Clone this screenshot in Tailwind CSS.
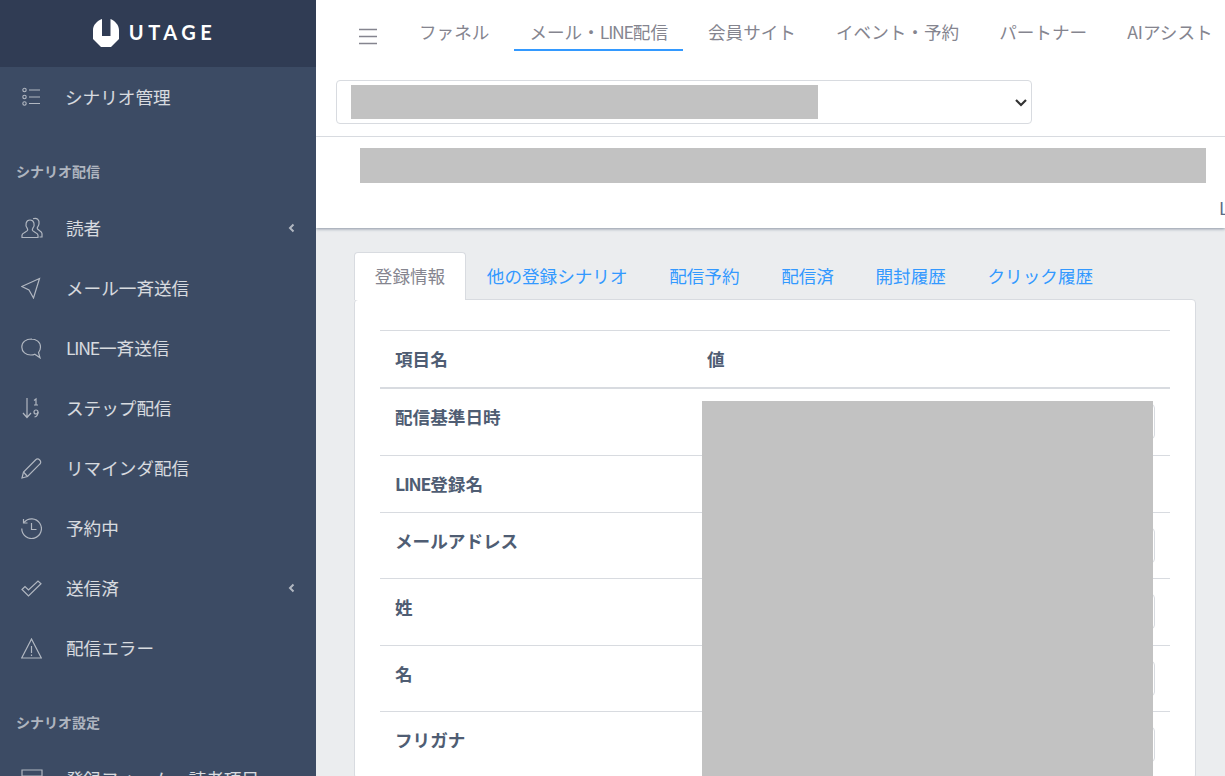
<!DOCTYPE html>
<html lang="ja">
<head>
    <meta charset="UTF-8">
    <title>UTAGE</title>
    <script src="https://cdn.jsdelivr.net/npm/@tailwindcss/browser@4"></script>
</head>
<body class="h-[776px] overflow-hidden bg-[#ebedef] text-[17.6px] leading-[26.4px] text-[#4f5d73] [font-family:'Noto_Sans_CJK_JP','Liberation_Sans',sans-serif]">
<div class="flex h-[776px] overflow-hidden">

    <!-- Sidebar -->
    <aside class="w-[316px] shrink-0 overflow-hidden bg-[#3c4b64] text-white/80">
        <div class="flex h-[67px] items-center justify-center gap-[10px] bg-[#303c54] pb-[2px] pr-[7px]">
            <svg width="26" height="28" viewBox="0 0 26 28" fill="#fff"><path d="M9 0C4 2 0 6 0 11v9l8 8h10l8-8v-9c0-5-4-9-8.500-11v17H9z"/></svg>
            <span class="text-[20px] font-bold tracking-[4.500px] text-white [font-family:Lato,'Liberation_Sans',sans-serif]">UTAGE</span>
        </div>

        <a class="flex h-[60px] items-center pl-[21px]">
            <svg class="mr-[24px] shrink-0 opacity-60" width="20" height="20" viewBox="0 0 20 20" fill="none" stroke="#fff" stroke-width="1.100"><circle cx="3.500" cy="3" r="1.700"/><circle cx="3.500" cy="10" r="1.700"/><circle cx="3.500" cy="16.500" r="1.700"/><path d="M8 3h11M8 10h11M8 16.500h11"/></svg>
            シナリオ管理
        </a>

        <div class="mt-[18px] flex h-[53px] items-center pl-4 text-[14px] font-bold text-white/60">シナリオ配信</div>

        <a class="flex h-[60px] items-center pl-[21px]">
            <svg class="mr-[23px] shrink-0 opacity-60" width="22" height="22" viewBox="0 0 22 22" fill="none" stroke="#fff" stroke-width="1.200"><path d="M1 20.500v-2.500c0-2 4.500-3 5.500-4.500.5-1 .2-1.700-.5-2.700-1.800-2.300-1.500-7.800 3-7.800s5 5.500 3 7.800c-.7 1-1 1.700-.5 2.700 1 1.500 5.500 2.500 5.500 4.500v2.500z"/><path d="M12 1.800c4-1.300 6.500 1 6 5-.2 2-1.500 3-1.800 4.200-.3 2 4.800 3 4.800 5.500v3.500h-2.500"/></svg>
            <span>読者</span>
            <svg class="ml-auto mr-[21px] opacity-60" width="7" height="10" viewBox="0 0 7 10" fill="none" stroke="#fff" stroke-width="2"><path d="M5.500 1.500L2 5l3.500 3.500"/></svg>
        </a>
        <a class="flex h-[60px] items-center pl-[21px]">
            <svg class="mr-[25px] shrink-0 opacity-60" width="20" height="22" viewBox="0 0 20 22" fill="none" stroke="#fff" stroke-width="1.200"><path d="M18.500 1.500L.8 9.500 8 13l4.500 8z"/></svg>
            メール一斉送信
        </a>
        <a class="flex h-[60px] items-center pl-[21px]">
            <svg class="mr-[24px] shrink-0 opacity-60" width="21" height="21" viewBox="0 0 21 21" fill="none" stroke="#fff" stroke-width="1.200"><path d="M10.500 1C5 1 .8 4 .8 9s4.200 8 9 8c1.500 0 3-.3 4-.8l5.200 3.600-1.500-5.300c1.200-1.500 2-3.100 2-5.500 0-5-4.200-8-9.500-8z"/></svg>
            <span><span class="tracking-[-1.200px]">LINE</span>一斉送信</span>
        </a>
        <a class="flex h-[60px] items-center pl-[21px]">
            <svg class="mr-[25px] shrink-0 opacity-60" width="20" height="22" viewBox="0 0 20 22" fill="none" stroke="#fff" stroke-width="1.200"><path d="M6 1v19M2 16l4 4.500 4-4.500"/><path d="M13 3.500l2-1.500v6M13 8h4" /><circle cx="15" cy="15" r="2"/><path d="M17 15c0 3-1 4.500-3.500 5"/></svg>
            ステップ配信
        </a>
        <a class="flex h-[60px] items-center pl-[21px]">
            <svg class="mr-[24px] shrink-0 opacity-60" width="21" height="21" viewBox="0 0 21 21" fill="none" stroke="#fff" stroke-width="1.200"><path d="M1 20l1.500-6L14.500 2c1.500-1.500 3-1.200 4.200 0s1.500 2.800 0 4.200L6.500 18.500z"/><path d="M2.500 14l4 4.500"/></svg>
            リマインダ配信
        </a>
        <a class="flex h-[60px] items-center pl-[21px]">
            <svg class="mr-[24px] shrink-0 opacity-60" width="21" height="21" viewBox="0 0 21 21" fill="none" stroke="#fff" stroke-width="1.200"><path d="M3 4.500A9.800 9.800 0 1 1 .8 10.500"/><path d="M2.500 1v4h4M10.500 5v6.500h5"/></svg>
            予約中
        </a>
        <a class="flex h-[60px] items-center pl-[21px]">
            <svg class="mr-[24px] shrink-0 opacity-60" width="21" height="21" viewBox="0 0 21 21" fill="none" stroke="#fff" stroke-width="1.200"><path d="M1 11.500l3-3 3.500 3.500L17 3l3 2.800L7.500 18z"/></svg>
            <span>送信済</span>
            <svg class="ml-auto mr-[21px] opacity-60" width="7" height="10" viewBox="0 0 7 10" fill="none" stroke="#fff" stroke-width="2"><path d="M5.500 1.500L2 5l3.500 3.500"/></svg>
        </a>
        <a class="flex h-[60px] items-center pl-[21px]">
            <svg class="mr-[24px] shrink-0 opacity-60" width="21" height="21" viewBox="0 0 21 21" fill="none" stroke="#fff" stroke-width="1.200"><path d="M10.500 1L.7 20h19.600z"/><path d="M10.500 8v7M10.500 16.500v1.500"/></svg>
            配信エラー
        </a>

        <div class="mt-[18px] flex h-[53px] items-center pl-4 text-[14px] font-bold text-white/60">シナリオ設定</div>

        <a class="flex h-[60px] items-center pl-[21px]">
            <svg class="mr-[23px] shrink-0 opacity-60" width="22" height="22" viewBox="0 0 22 22" fill="none" stroke="#fff" stroke-width="1.200"><path d="M1 2h20v18H1zM1 8h20M8 8v12"/></svg>
            登録フォーム・読者項目
        </a>
    </aside>

    <main class="min-w-0 flex-1 overflow-hidden">
        <!-- Header -->
        <header class="h-[228px] overflow-hidden bg-white shadow-[0_1px_3px_rgba(60,75,100,0.55)]">
            <div class="flex h-[67px] items-start whitespace-nowrap pl-[43px] text-[#85858f]">
                <svg class="mr-[27px] mt-[28px] shrink-0" width="18" height="17" viewBox="0 0 18 17" fill="none" stroke="#85858f" stroke-width="1.500"><path d="M0 1.500h18M0 8.500h18M0 15.500h18"/></svg>
                <nav class="flex gap-[10px] pt-[19px]">
                    <a class="h-[32px] px-[15px]">ファネル</a>
                    <a class="h-[32px] border-b-2 border-[#3399ff] px-[15px]">メール・<span class="tracking-[-1.200px]">LINE</span>配信</a>
                    <a class="h-[32px] px-[15px]">会員サイト</a>
                    <a class="h-[32px] px-[15px]">イベント・予約</a>
                    <a class="h-[32px] px-[15px]">パートナー</a>
                    <a class="h-[32px] px-[15px]">AIアシスト</a>
                </nav>
            </div>

            <div class="relative mx-5 mt-[13px] w-[696px]">
                <select class="block h-[44px] w-full appearance-none rounded border border-[#d8dbe0] bg-white px-3 text-[#333]"><option></option></select>
                <div class="absolute left-[15px] top-[5px] h-[34px] w-[467px] bg-[#c2c2c2]"></div>
                <svg class="pointer-events-none absolute right-[4px] top-[18px]" width="14" height="10" viewBox="0 0 14 10" fill="none" stroke="#333" stroke-width="2.200"><path d="M2 2l5 5 5-5"/></svg>
            </div>

            <div class="mt-3 h-[92px] border-t border-[#d8dbe0] pl-[44px] pt-[11px]">
                <div class="h-[35px] w-[846px] bg-[#c2c2c2]"></div>
                <div class="mt-3 pl-[859px] leading-[26px] text-[#5b6b85]">L</div>
            </div>
        </header>

        <!-- Tabs -->
        <div class="px-[38px] pt-6">
            <div class="flex items-end">
                <a class="relative z-10 -mb-px h-[48px] rounded-t border border-b-0 border-[#d8dbe0] bg-white px-[19.800px] pt-[10px] text-[#85858f]">登録情報</a>
                <a class="h-[47px] border border-transparent px-[19.800px] pt-[10px] text-[#3399ff]">他の登録シナリオ</a>
                <a class="h-[47px] border border-transparent px-[19.800px] pt-[10px] text-[#3399ff]">配信予約</a>
                <a class="h-[47px] border border-transparent px-[19.800px] pt-[10px] text-[#3399ff]">配信済</a>
                <a class="h-[47px] border border-transparent px-[19.800px] pt-[10px] text-[#3399ff]">開封履歴</a>
                <a class="h-[47px] border border-transparent px-[19.800px] pt-[10px] text-[#3399ff]">クリック履歴</a>
            </div>

            <div class="relative w-[842px] rounded border border-[#d8dbe0] bg-white px-[25px] pt-[30px]">
                <table class="w-[790px] table-fixed border-collapse font-bold">
                    <thead>
                        <tr class="h-[57px] border-t border-b-2 border-[#d8dbe0]">
                            <th class="w-[312px] px-[15px] text-left">項目名</th>
                            <th class="px-[15px] text-left">値</th>
                        </tr>
                    </thead>
                    <tbody>
                        <tr class="border-b border-[#d8dbe0]">
                            <td class="px-[15px] pb-[16px] pt-[15px] align-top">配信基準日時</td>
                            <td class="px-[15px] pb-[16px] pt-[15px]"><div class="h-[35px] rounded border border-[#d8dbe0]"></div></td>
                        </tr>
                        <tr class="border-b border-[#d8dbe0]">
                            <td class="p-[15px] align-top"><span class="tracking-[-1.200px]">LINE</span>登録名</td>
                            <td class="p-[15px]"></td>
                        </tr>
                        <tr class="border-b border-[#d8dbe0]">
                            <td class="p-[15px] align-top">メールアドレス</td>
                            <td class="p-[15px]"><div class="h-[35px] rounded border border-[#d8dbe0]"></div></td>
                        </tr>
                        <tr class="border-b border-[#d8dbe0]">
                            <td class="px-[15px] pb-[16px] pt-[15px] align-top">姓</td>
                            <td class="px-[15px] pb-[16px] pt-[15px]"><div class="h-[35px] rounded border border-[#d8dbe0]"></div></td>
                        </tr>
                        <tr class="border-b border-[#d8dbe0]">
                            <td class="p-[15px] align-top">名</td>
                            <td class="p-[15px]"><div class="h-[35px] rounded border border-[#d8dbe0]"></div></td>
                        </tr>
                        <tr class="border-b border-[#d8dbe0]">
                            <td class="p-[15px] align-top">フリガナ</td>
                            <td class="p-[15px]"><div class="h-[35px] rounded border border-[#d8dbe0]"></div></td>
                        </tr>
                    </tbody>
                </table>
                <!-- redacted values -->
                <div class="absolute left-[347px] top-[101px] h-[500px] w-[451px] bg-[#c2c2c2]"></div>
            </div>
        </div>
    </main>
</div>
</body>
</html>
